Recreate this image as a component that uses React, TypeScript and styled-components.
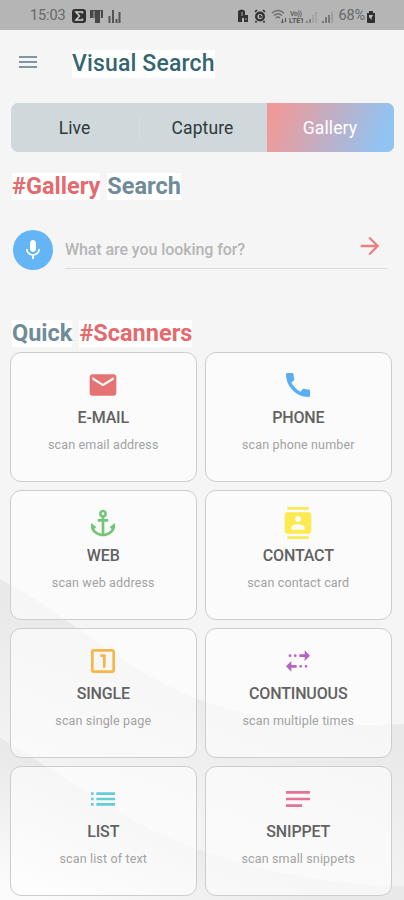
import React from "react";
import styled, { createGlobalStyle } from "styled-components";
import {
  MdAnchor,
  MdArrowForward,
  MdCall,
  MdContacts,
  MdEmail,
  MdList,
  MdMenu,
  MdMic,
  MdNotes,
  MdOutlineLooksOne,
  MdOutlineMultipleStop,
} from "react-icons/md";
import type { IconType } from "react-icons";

const GlobalStyle = createGlobalStyle`
  * { box-sizing: border-box; }
  body {
    margin: 0;
    background: #f5f5f5;
    font-family: Roboto, "Liberation Sans", sans-serif;
  }
`;

const Screen = styled.div`
  position: relative;
  width: 404px;
  height: 900px;
  overflow: hidden;
  background: #f5f5f5;
`;

const Backdrop = styled.svg`
  position: absolute;
  inset: 0;
  width: 404px;
  height: 900px;
`;

const Content = styled.div`
  position: relative;
  display: flex;
  flex-direction: column;
`;

const StatusBar = styled.header`
  display: flex;
  justify-content: space-between;
  align-items: center;
  height: 30px;
  padding: 1px 28px 0 30px;
  background: #b5b5b5;
  color: #686868;
`;

const StatusText = styled.span<{ $size: number; $spacing: number }>`
  font-size: ${(p) => p.$size}px;
  letter-spacing: ${(p) => p.$spacing}px;
  line-height: 18px;
`;

const StatusIcons = styled.svg`
  display: block;
  height: 18px;
`;

const StatusGroup = styled.div<{ $gap: number }>`
  display: flex;
  align-items: center;
  gap: ${(p) => p.$gap}px;
`;

const AppBar = styled.div`
  display: flex;
  align-items: center;
  height: 67px;
  padding: 0 0 4px 16px;
  gap: 32px;
  color: #8097a2;
`;

const Title = styled.h1`
  margin: 5px 0 0;
  background: #fff;
  color: #35656f;
  font-size: 23px;
  font-weight: 500;
  line-height: 28px;
  letter-spacing: 0.15px;
`;

const Tabs = styled.nav`
  display: grid;
  grid-template-columns: 128px 128px 127px;
  width: 383px;
  height: 49px;
  margin: 6px 0 0 11px;
  border-radius: 7px;
  overflow: hidden;
  background: #cfd8da;
`;

const Tab = styled.button<{ $active?: boolean; $divided?: boolean }>`
  border: 0;
  padding: 1px 1px 0 0;
  font: 400 17.5px/48px Roboto, sans-serif;
  letter-spacing: 0.1px;
  color: ${(p) => (p.$active ? "#fff" : "#30383b")};
  background: ${(p) =>
    p.$active
      ? "linear-gradient(110deg, #ef9a9a 8%, #90c4f2 90%)"
      : p.$divided
        ? "linear-gradient(#d9dfe0, #d9dfe0) 0 12px / 1px 26px no-repeat"
        : "transparent"};
`;

const Heading = styled.h2<{ $top: number }>`
  display: flex;
  gap: 7px;
  margin: ${(p) => p.$top}px 0 0 12px;
  font-size: 23.5px;
  font-weight: 700;
  line-height: 27px;
`;

const Word = styled.span<{ $accent?: boolean }>`
  background: #fff;
  color: ${(p) => (p.$accent ? "#e36a6d" : "#708c99")};
`;

const SearchRow = styled.div`
  display: flex;
  align-items: center;
  gap: 12px;
  height: 40px;
  margin: 30px 16px 0 13px;
`;

const MicButton = styled.button`
  display: grid;
  place-items: center;
  width: 40px;
  height: 40px;
  padding: 0;
  border: 0;
  border-radius: 50%;
  background: #64b5f6;
  color: #fff;
`;

const Field = styled.div`
  display: flex;
  flex: 1;
  justify-content: space-between;
  align-items: center;
  height: 38px;
  padding: 0 4px 0 0;
  border-bottom: 1px solid #dedede;
`;

const Placeholder = styled.span`
  color: #b5b5b5;
  font-size: 16px;
  font-weight: 500;
  line-height: 20px;
  letter-spacing: -0.08px;
`;

const Submit = styled.span`
  display: flex;
  margin-top: -7px;
  color: #ea8085;
`;

const Grid = styled.main`
  display: grid;
  grid-template-columns: 187.5px 187.5px;
  grid-auto-rows: 130px;
  gap: 8px 7.5px;
  margin: 5px 0 0 9.5px;
`;

const Card = styled.article`
  display: flex;
  flex-direction: column;
  align-items: center;
  padding-top: 16px;
  border: 1px solid #cdcdcd;
  border-radius: 11px;
  background: rgba(255, 255, 255, 0.6);
`;

const CardIcon = styled.span<{ $color: string }>`
  display: flex;
  color: ${(p) => p.$color};
`;

const CardTitle = styled.h3`
  margin: 7px 0 0;
  color: #626262;
  font-size: 16px;
  font-weight: 500;
  line-height: 20px;
  letter-spacing: -0.15px;
`;

const CardText = styled.p`
  margin: 8px 0 0;
  color: #a2a2a2;
  font-size: 12.5px;
  line-height: 17px;
  letter-spacing: 0.15px;
`;

interface Scanner {
  title: string;
  text: string;
  color: string;
  icon: IconType;
}

const scanners: Scanner[] = [
  { title: "E-MAIL", text: "scan email address", color: "#e57373", icon: MdEmail },
  { title: "PHONE", text: "scan phone number", color: "#5aaef2", icon: MdCall },
  { title: "WEB", text: "scan web address", color: "#74c578", icon: MdAnchor },
  { title: "CONTACT", text: "scan contact card", color: "#fbea50", icon: MdContacts },
  { title: "SINGLE", text: "scan single page", color: "#f9b546", icon: MdOutlineLooksOne },
  { title: "CONTINUOUS", text: "scan multiple times", color: "#b464c5", icon: MdOutlineMultipleStop },
  { title: "LIST", text: "scan list of text", color: "#66ccd9", icon: MdList },
  { title: "SNIPPET", text: "scan small snippets", color: "#e5709a", icon: MdNotes },
];

export default function App() {
  return (
    <Screen>
      <GlobalStyle />
      <Backdrop viewBox="0 0 404 900">
        <defs>
          <linearGradient id="wave" gradientUnits="userSpaceOnUse" x1="90" y1="630" x2="40" y2="765">
            <stop offset="0" stopColor="#e9e9e9" />
            <stop offset="1" stopColor="#f3f3f3" />
          </linearGradient>
          <linearGradient id="fold" gradientUnits="userSpaceOnUse" x1="90" y1="790" x2="40" y2="900">
            <stop offset="0" stopColor="#e9e9e9" />
            <stop offset="1" stopColor="#fbfbfb" />
          </linearGradient>
        </defs>
        <path d="M0 579C65 612 120 667 190 696C260 724 330 727 404 724V900H0Z" fill="url(#wave)" />
        <path d="M0 738C65 775 120 822 195 848C260 872 330 885 404 886V900H0Z" fill="url(#fold)" />
      </Backdrop>
      <Content>
        <StatusBar>
          <StatusGroup $gap={5}>
            <StatusText $size={14.5} $spacing={-0.1}>15:03</StatusText>
            <StatusIcons width="52" viewBox="0 0 52 18">
              <rect x="1" y="2" width="14" height="14" rx="3" fill="#303030" />
              <path d="M11.5 6.5V5H5l3.5 4L5 13h6.500V11.500" fill="none" stroke="#ccc" strokeWidth="1.6" />
              <path d="M19 3h13v8h-3v5h-5v-5h-5Z" fill="#484848" />
              <path d="M23 4v9M29.500 4v7" stroke="#aaa" strokeWidth="1" />
              <path d="M38.500 9v7M42 3v13M45.500 12v4M48.500 5v11" stroke="#555" strokeWidth="2" />
            </StatusIcons>
          </StatusGroup>
          <StatusGroup $gap={4}>
            <StatusIcons width="96" viewBox="0 0 96 18">
              <path d="M0 4q4-3 7 0v4h3v7H6v-4H4v4H0Z" fill="#333" />
              <path d="M4 5v4M8 11v2" stroke="#aaa" strokeWidth="1" />
              <circle cx="22" cy="9.500" r="3.800" fill="none" stroke="#333" strokeWidth="2.400" />
              <path d="M17 5l2-2M25 3l2 2M18.500 14l-1 1.500M25.500 14l1 1.500M22 8v2h2" fill="none" stroke="#333" strokeWidth="1.700" />
              <path d="M34 6q6-5 12 0M36 8.500q4-3.500 8 0M38 11q2-2 4 0" fill="none" stroke="#6d6d6d" strokeWidth="1.500" />
              <path d="M44.500 12v4m-1.500-1.500l1.500 1.500l1.500-1.500M47.500 15v-4" fill="none" stroke="#505050" strokeWidth="1" />
              <text x="52" y="8.500" fontSize="7" fontWeight="700" fill="#666" textLength="12">Vo))</text>
              <text x="51" y="16" fontSize="7" fontWeight="700" fill="#555" textLength="15">LTE1</text>
              <path d="M69 14v2M72 12v4" stroke="#777" strokeWidth="1.600" />
              <path d="M75 8v8M78 5v11" stroke="#a0a0a0" strokeWidth="1.600" />
              <path d="M85 14v2M88 10v6M91 8v8" stroke="#737373" strokeWidth="1.800" />
              <path d="M94 5v11" stroke="#999" strokeWidth="1.500" />
            </StatusIcons>
            <StatusGroup $gap={1}>
              <StatusText $size={14.5} $spacing={-0.1}>68%</StatusText>
              <StatusIcons width="10" viewBox="0 0 10 18">
                <path d="M3 4h4v2h2v9q0 1-1 1H2q-1 0-1-1V6h2Z" fill="#303030" />
                <path d="M3 8h4L5.500 11v2L3 10Z" fill="#bbb" />
              </StatusIcons>
            </StatusGroup>
          </StatusGroup>
        </StatusBar>
        <AppBar>
          <MdMenu size={24} />
          <Title>Visual Search</Title>
        </AppBar>
        <Tabs>
          <Tab>Live</Tab>
          <Tab $divided>Capture</Tab>
          <Tab $active>Gallery</Tab>
        </Tabs>
        <Heading $top={21}>
          <Word $accent>#Gallery</Word>
          <Word>Search</Word>
        </Heading>
        <SearchRow>
          <MicButton aria-label="Voice search">
            <MdMic size={24} />
          </MicButton>
          <Field>
            <Placeholder>What are you looking for?</Placeholder>
            <Submit>
              <MdArrowForward size={28} />
            </Submit>
          </Field>
        </SearchRow>
        <Heading $top={50}>
          <Word>Quick</Word>
          <Word $accent>#Scanners</Word>
        </Heading>
        <Grid>
          {scanners.map(({ title, text, color, icon: Icon }) => (
            <Card key={title}>
              <CardIcon $color={color}>
                <Icon size={32} />
              </CardIcon>
              <CardTitle>{title}</CardTitle>
              <CardText>{text}</CardText>
            </Card>
          ))}
        </Grid>
      </Content>
    </Screen>
  );
}
